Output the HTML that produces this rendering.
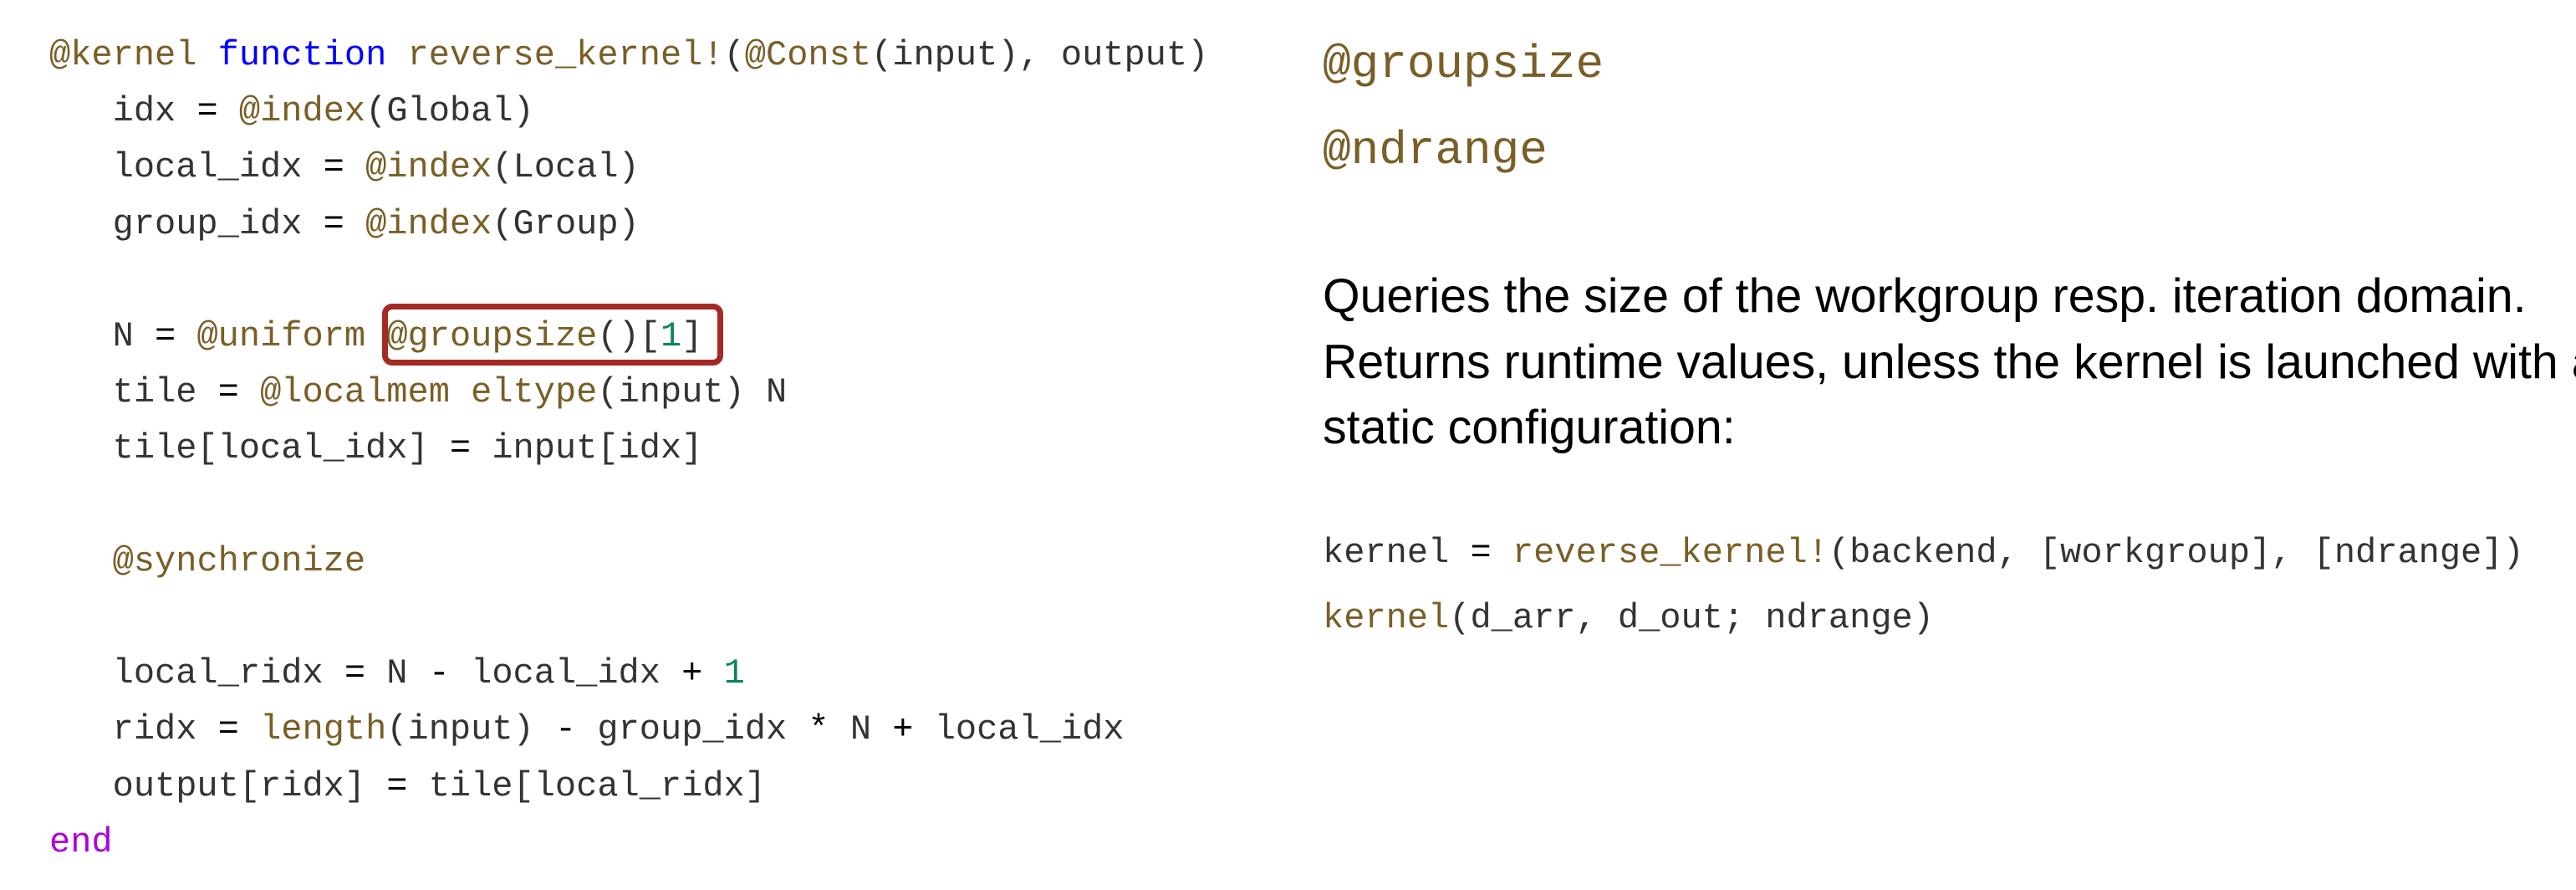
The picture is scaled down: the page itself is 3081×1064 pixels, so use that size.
<!DOCTYPE html>
<html><head><meta charset="utf-8"><style>
html,body{margin:0;padding:0;background:#fff;width:3081px;height:1064px;overflow:hidden;position:relative}
.m{font-family:"Liberation Mono",monospace;white-space:pre;position:absolute;color:#333}
.b{color:#795e26}.k{color:#0000ff}.n{color:#098658}.p{color:#af00db}.o{color:#000}
#code{left:59px;top:33px;font-size:42px;line-height:67.2px}
.box{position:absolute;left:457px;top:363px;width:394px;height:60px;border:7px solid #a52a24;border-radius:12px}
.h{font-size:56px;left:1582px;line-height:normal}
.para{position:absolute;left:1582px;top:315px;font-family:"Liberation Sans",sans-serif;font-size:57.3px;line-height:78.5px;color:#000;white-space:nowrap}
.rc{left:1582px;font-size:42px;line-height:normal}
</style></head><body>
<div class="m" id="code"><span class="b">@kernel</span> <span class="k">function</span> <span class="b">reverse_kernel!</span>(<span class="b">@Const</span>(input), output)
   idx <span class="o">=</span> <span class="b">@index</span>(Global)
   local_idx <span class="o">=</span> <span class="b">@index</span>(Local)
   group_idx <span class="o">=</span> <span class="b">@index</span>(Group)

   N <span class="o">=</span> <span class="b">@uniform</span> <span class="b">@groupsize</span>()[<span class="n">1</span>]
   tile <span class="o">=</span> <span class="b">@localmem</span> <span class="b">eltype</span>(input) N
   tile[local_idx] <span class="o">=</span> input[idx]

   <span class="b">@synchronize</span>

   local_ridx <span class="o">=</span> N <span class="o">-</span> local_idx <span class="o">+</span> <span class="n">1</span>
   ridx <span class="o">=</span> <span class="b">length</span>(input) <span class="o">-</span> group_idx <span class="o">*</span> N <span class="o">+</span> local_idx
   output[ridx] <span class="o">=</span> tile[local_ridx]
<span class="p">end</span></div>
<div class="box"></div>
<div class="m h b" style="top:45px">@groupsize</div>
<div class="m h b" style="top:148px">@ndrange</div>
<div class="para">Queries the size of the workgroup resp. iteration domain.<br>Returns runtime values, unless the kernel is launched with a<br>static configuration:</div>
<div class="m rc" style="top:637px">kernel <span class="o">=</span> <span class="b">reverse_kernel!</span>(backend, [workgroup], [ndrange])</div>
<div class="m rc" style="top:715px"><span class="b">kernel</span>(d_arr, d_out; ndrange)</div>
</body></html>
